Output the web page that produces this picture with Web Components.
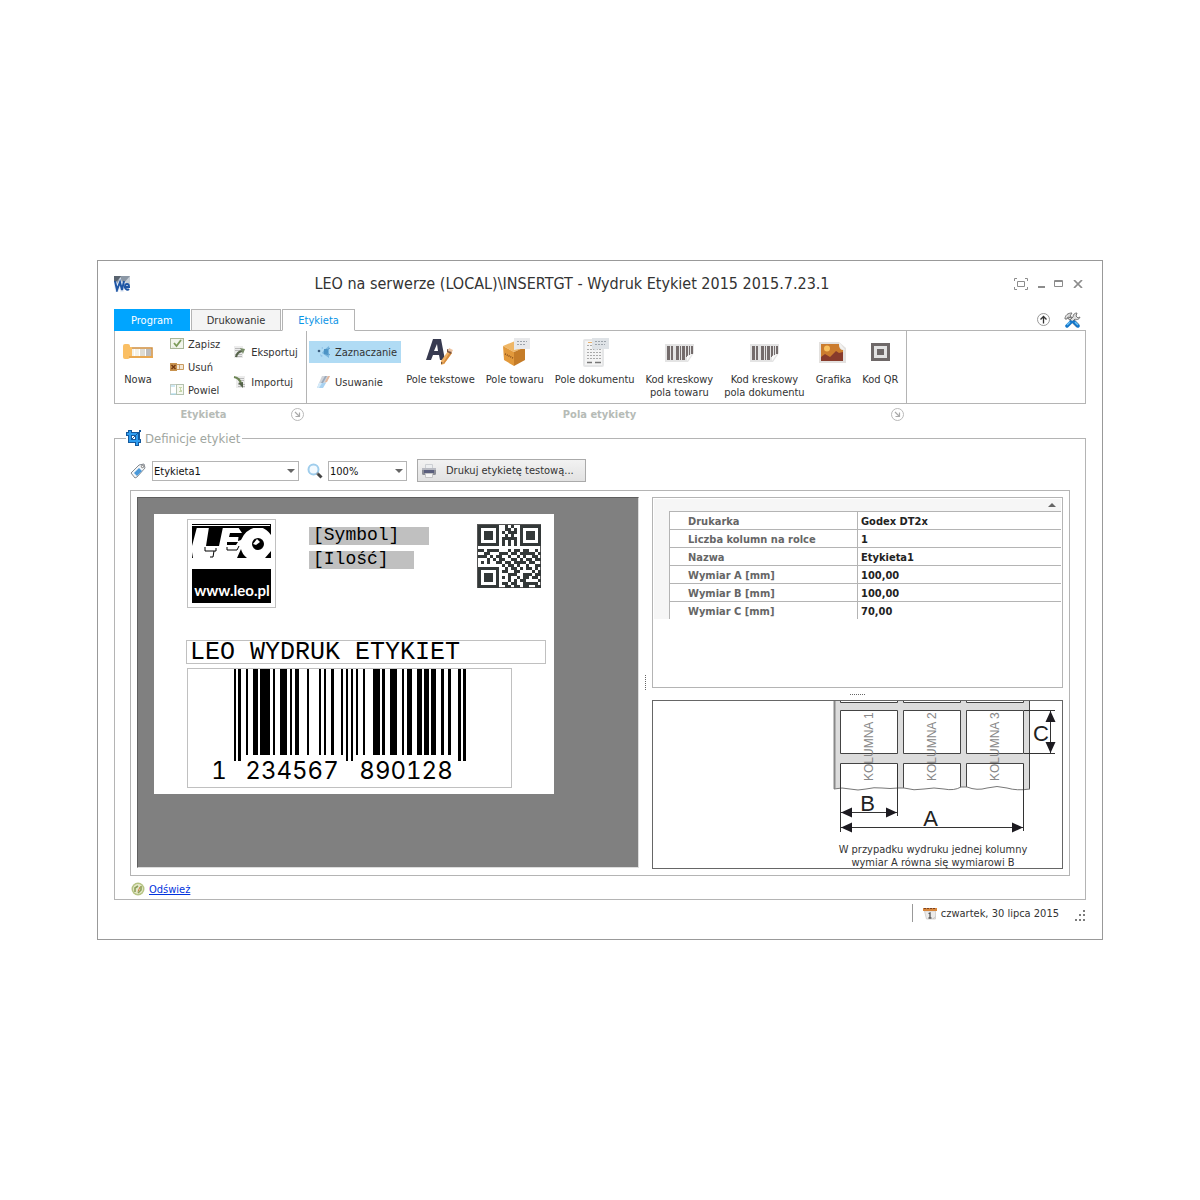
<!DOCTYPE html>
<html lang="pl">
<head>
<meta charset="utf-8">
<title>Wydruk Etykiet 2015</title>
<style>
  html, body { margin: 0; background: #fff; }
  body {
    min-height: 100vh; box-sizing: border-box; padding: 0 97px;
    display: grid; align-items: center; grid-template-columns: minmax(0, 1fr);
    font: 11px/13px "DejaVu Sans Condensed", "DejaVu Sans", sans-serif; color: #333;
    --line: #b4b4b4; --accent: #00a5ff;
  }
</style>
</head>
<body>
<label-app></label-app>
<script>
const ICONS = {
  app: [16, 16, `<path fill="#8b97a5" d="M0 0h16v9H0z"/><path fill="#59636f" d="M0 0h7L0 9z"/><path fill="#c9d0d8" d="M16 0v9l-7-1z"/><path fill="none" stroke="#e8eef7" stroke-width="4" d="M1 6l2 8 3-7 2 7 2-8"/><path fill="none" stroke="#1f56a5" stroke-width="2" d="M1 5l2 9 3-8 2 8 2-9M10 11h5c0-4-4-4-4 0 0 3 3 3 4 2"/>`],
  fullscreen: [14, 12, `<path fill="none" stroke="#8c8c8c" d="M.5 3V.5H3M11 .5h2.500V3M13.500 9v2.500H11M3 11.500H.5V9M3.500 3.500h7v5h-7z"/>`],
  minimize: [8, 8, `<path fill="#8c8c8c" d="M1 6h7v2H1z"/>`],
  maximize: [10, 8, `<path fill="none" stroke="#8c8c8c" d="M.5.5h8v6h-8zM0 1.500h9"/>`],
  close: [10, 8, `<path fill="none" stroke="#8c8c8c" stroke-width="1.700" d="M1 0l8 8M9 0L1 8"/>`],
  up: [13, 13, `<circle cx="6.500" cy="6.500" r="6" fill="#fff" stroke="#999"/><path fill="none" stroke="#333" stroke-width="1.300" d="M6.500 10.500V3.500M3.500 6.500l3-3 3 3"/>`],
  tools: [17, 16, `<path d="M4 4l10 10" stroke="#777" stroke-width="4"/><path d="M4 4l9 9" stroke="#eee" stroke-width="2"/><path d="M1 7c0-4 3-6 7-6L6 4l1 2-3-1-1 2z" fill="#ddd" stroke="#777"/><path d="M16 5c-1 3-4 3-5 2l-3 3-2-2 3-3c0-3 2-4 4-4l-1 3 2 2z" fill="#ddd" stroke="#777"/><path d="M7 10l-4 4M10 10l4 4" stroke="#1476c9" stroke-width="3.500" stroke-linecap="round"/><path d="M6 10l-3 3M11 10l3 3" stroke="#65bdf4" stroke-width="1.500"/>`],
  launcher: [13, 13, `<circle cx="6.500" cy="6.500" r="6" fill="#fff" stroke="#b9b9b9"/><path fill="none" stroke="#aaa" stroke-width="1.200" d="M4 4l4.500 4.500M8.500 4.500v4h-4"/>`],
  nowa: [32, 32, `<path fill="#f5f2e8" stroke="#cf8e3f" stroke-width="1.500" d="M8 11h22v9H8z"/><path fill="#bdbdbd" d="M24 12h5v7h-5z"/><path fill="#dedcd4" d="M18 12h5v7h-5z"/><path stroke="#fff" d="M12.500 12v7M17.500 12v7M23.500 12v7"/><path fill="#fabf64" d="M1 9q0-2 2-2h3q2 0 2 2v1h2v10H8v1l-2 1H3q-2 0-2-2z"/><path fill="#e9a850" d="M7 19h24v2H7z"/>`],
  zapisz: [14, 12, `<rect x=".5" y=".5" width="13" height="10" fill="#f3f6ec" stroke="#a9b798"/><path fill="#e2e7db" d="M2 8l4 2H2zM13 1v3l-3-3z"/><path fill="none" stroke="#7d9c5b" stroke-width="1.800" d="M4 5l2.500 3L11 2"/>`],
  usun: [14, 12, `<path fill="#f3e7d5" stroke="#c99a5e" d="M6 3.500h7.500v5H6z"/><path fill="#c8924e" d="M0 2h7v8H0z"/><path stroke="#733912" stroke-width="1.400" d="M1.500 4l4 4M5.500 4l-4 4"/><path stroke="#cba479" d="M9.500 4v4"/>`],
  powiel: [14, 12, `<rect x=".5" y=".5" width="7" height="10" fill="#fff" stroke="#c3ccc3"/><rect x="6.500" y=".5" width="7" height="10" fill="#f6f8f0" stroke="#b4c2b0"/><path stroke="#9cd3e8" d="M1 2h4M1 10h5"/><path fill="#c6d7a8" d="M9 3h3v1h-1v2h1v2H9V7h1V4H9z"/>`],
  eksportuj: [14, 14, `<path fill="#ececec" d="M1 1h9v12H1z"/><path stroke="#b9b9b9" d="M2 3.500h6M2 5.500h6M2 9.500h7M2 11.500h7"/><path fill="none" stroke="#55634a" stroke-width="2.200" d="M3 12q1-5 6-6"/><path fill="#788c68" d="M7 3l5 1-2 5z"/>`],
  importuj: [14, 14, `<path fill="#ececec" d="M3 1h9v12H3z"/><path stroke="#b9b9b9" d="M5 3.500h6M5 5.500h6M5 9.500h7M5 11.500h7"/><path fill="none" stroke="#6d8554" stroke-width="2.200" d="M1 2q6 1 7 7"/><path fill="#55634a" d="M5 8l5-1v6z"/>`],
  zaznacz: [16, 14, `<path fill="#79b5dd" d="M13 1v12L6 8l2-3z"/><path fill="#4c93c5" d="M8 4h4v6l-4-1z"/><circle cx="3" cy="6" r="1.300" fill="#3d5f80"/><path fill="#8fc0e6" d="M4 9l3 2-2 1zM5 3l2-1v2z"/><path stroke="#5a9ccc" d="M14 3l-3 2M14 10l-3-2"/>`],
  usuwanie: [16, 14, `<path fill="#d0d4da" d="M6 1h8l-4 7H3z"/><path fill="#9aa9bb" d="M9 1h2L7 8H5z"/><path fill="#e5b79a" d="M12 1h2l-3 6H9z"/><path fill="#a9d2f1" d="M3 8h7l-3 5H1z"/><path fill="#d7ebf8" d="M3 8h3l-3 5H1z"/>`],
  tekst: [32, 32, `<path fill="#373a50" d="M9 2h8l4 21h-5l-1-5H9l-2 5H2zm4 5l-3 7h4z"/><path fill="#f0b266" d="M24 14l4 2-8 11-3 1v-4z"/><path fill="#d58b3c" d="M26 15l2 1-8 11-1-1z"/><path fill="#77523f" d="M23 12l5 2-1 3-4-2z"/><path fill="#edc3a0" d="M25 11l4 2-1 2-4-1z"/><path fill="#553b2b" d="M17 27v-2l2 1z"/>`],
  towar: [32, 32, `<path fill="#efb767" d="M4 9l12-5 10 6-11 5z"/><path fill="#e2993b" d="M4 9l11 6v14L5 23z"/><path fill="#c57c28" d="M15 15l11-5v13l-11 6z"/><path stroke="#884d1c" stroke-width="1.500" stroke-dasharray="1 1" d="M6 17l8 4"/><path fill="#e8e9eb" d="M15 1h16v11H20l-5 1z"/><path stroke="#9da4ab" stroke-dasharray="2 1" d="M18 4.500h10M18 7.500h9"/>`],
  dokument: [32, 32, `<rect x="4" y="2" width="21" height="28" rx="2" fill="#e5e6e7"/><path fill="#f4f4f4" d="M6 4h17v24H6z"/><path stroke="#e8b06e" d="M9 5.500h4"/><path stroke="#aaa" stroke-dasharray="2 1" d="M8 8.500h13M8 12.500h14M8 15.500h14M8 18.500h14M8 21.500h14"/><path stroke="#777" stroke-width="1.500" d="M8 25.500h5M16 25.500h6"/><path fill="#dfe3e7" d="M13 1h17v11H19l-3 2-1-2h-2z"/><path stroke="#9da4ab" stroke-dasharray="2 1" d="M16 4.500h11M16 7.500h10"/>`],
  kreskowy: [32, 32, `<path fill="#e4e4e4" d="M2 7h29v9l-6 9H2z"/><path fill="#746c6c" d="M4 9h3v14H4zM8 9h2v14H8zM13 9h3v14h-3zM17 9h1v14h-1zM19 9h3v14h-3zM23 9h2v11h-2zM26 9h1v10h-1zM28 9h2v8h-2z"/><path fill="#fafafa" d="M24 24v-5l5-2z"/>`],
  grafika: [32, 32, `<path fill="#e3e1df" d="M2 5h20l7 6v15H2z"/><path fill="#cb7c2e" d="M4 7h18q0 6 4 6v11H4z"/><circle cx="10" cy="11.500" r="3" fill="#f9c15f"/><path fill="#883b2c" d="M4 20l4-3 5 3 6-6 3 2 4-1v9H4z"/><path fill="#f3f2f0" d="M22 5l6 8q-6 0-6-8z"/>`],
  qr: [32, 32, `<path fill="#6e6868" d="M7 6h19v18H7z"/><path fill="#e2e2e2" d="M10 9h13v12H10z"/><path fill="#6e6868" d="M13 12h7v6h-7z"/>`],
  crop: [16, 16, `<path fill="#15599c" d="M2 0h4v2h7V0h2v2h-1v7h1v4h-2v3h-4v-3H2V6H0V2h2z"/><path fill="#2d9cf0" d="M3 1h2v2h7v7h2v2h-2v3h-2v-3H3V5H1V3h2z"/><path fill="#15599c" d="M5 5h5v5H5z"/><path fill="#fff" d="M6 6h3v3H6z"/><path stroke="#15599c" d="M5 10l8-8"/>`],
  tag: [16, 16, `<path fill="#f4f6f8" stroke="#858b92" d="M1 10L9 2l5-1 1 4-8 9-2 1z"/><path fill="#4a98d8" d="M4 10l5-5 3 3-5 5z"/><circle cx="12.500" cy="3.500" r="1.200" fill="#fff" stroke="#777"/>`],
  lupa: [16, 16, `<circle cx="6.500" cy="6.500" r="5" fill="#f3faff" stroke="#9fcdec" stroke-width="2"/><path stroke="#444" stroke-width="3" d="M10.500 10.500l4 4"/><path stroke="#888" stroke-width="2" d="M10 10l1 1"/>`],
  drukarka: [16, 16, `<path fill="#eceef0" stroke="#cdd0d4" d="M4.500 1.500h7v4h-7z"/><rect x="1" y="5" width="14" height="7" rx="1.500" fill="#8b8d96"/><path fill="#5b5f7d" d="M3 7h10v3H3z"/><path fill="#b8bac2" d="M1 5h14v2H1z"/><path fill="#f5f5f5" stroke="#c5c5c5" d="M4.500 10.500h7v4h-7z"/>`],
  odswiez: [14, 14, `<circle cx="7" cy="7" r="6.500" fill="#b5c383"/><circle cx="7" cy="7" r="5" fill="#e4e8c8"/><path fill="none" stroke="#8ba05a" stroke-width="1.600" d="M4 10V6l3-2M10 4v4l-3 3"/><path stroke="#c98040" d="M7 9.500L9 5"/>`],
  kalendarz: [16, 14, `<path fill="#ecebea" stroke="#d5d3d1" d="M2.500 5h11v8h-9z"/><path fill="#d8873c" d="M1 2h14v3H1z"/><path stroke="#7c4221" stroke-dasharray="2 1" d="M2 2.500h12"/><path fill="none" stroke="#555" stroke-width="1.300" d="M6.500 7.500L8 7v5M6.500 12h3"/><path fill="#c7c3c0" d="M10 13l4-3-2 3z"/>`],
  uchwyt: [12, 12, `<path fill="#7c7c7c" d="M9 0h2v2H9zM5 4h2v2H5zM9 4h2v2H9zM1 9h2v2H1zM5 9h2v2H5zM9 9h2v2H9z"/>`],
};

function define(name, css, html, setup) {
  const template = document.createElement('template');
  template.innerHTML = `<style>:host{display:block;box-sizing:border-box}*{box-sizing:border-box}button{font:inherit;color:inherit;background:none;border:0;padding:0;margin:0}${css}</style>${html}`;
  customElements.define(name, class extends HTMLElement {
    constructor() {
      super();
      this.attachShadow({ mode: 'open' }).append(template.content.cloneNode(true));
    }
    connectedCallback() { if (setup) setup(this, this.shadowRoot); }
  });
}

define('ui-icon', `:host{display:block;flex:none}svg{display:block}`, ``, (el, root) => {
  const [w, h, body] = ICONS[el.getAttribute('name')];
  if (!root.querySelector('svg'))
    root.innerHTML += `<svg width="${w}" height="${h}" viewBox="0 0 ${w} ${h}" aria-hidden="true">${body}</svg>`;
});

define('title-bar', `
  :host{display:flex;align-items:center;height:46px;margin-bottom:2px;padding-right:3px}
  h1{flex:1;margin:0;text-align:center;font:16px/20px "DejaVu Sans Condensed","DejaVu Sans",sans-serif;color:#333}
  nav{display:flex;align-items:center;gap:9px}
  button{display:block}`,
  `<ui-icon name="app"></ui-icon><h1><slot></slot></h1>
   <nav><button aria-label="Pełny ekran"><ui-icon name="fullscreen"></ui-icon></button>
   <button aria-label="Minimalizuj"><ui-icon name="minimize"></ui-icon></button>
   <button aria-label="Maksymalizuj"><ui-icon name="maximize"></ui-icon></button>
   <button aria-label="Zamknij"><ui-icon name="close"></ui-icon></button></nav>`);

define('tab-strip', `
  :host{display:flex;height:21px;gap:1px;padding-right:5px}
  .tools{display:flex;gap:14px;align-items:center;margin-left:auto}`,
  `<slot></slot><div class="tools"><button aria-label="Zwiń wstążkę"><ui-icon name="up"></ui-icon></button><button aria-label="Opcje"><ui-icon name="tools"></ui-icon></button></div>`);

define('tab-item', `
  button{display:block;height:22px;padding:0 15px;border:1px solid var(--line);background:#f4f4f4;position:relative}
  :host([kind=program]) button{background:var(--accent);border-color:var(--accent);color:#fff;padding:0 16px}
  :host([kind=selected]) button{background:#fff;color:#0a94e6;border-bottom-color:#fff}`,
  `<button role="tab"><slot></slot></button>`);

define('ribbon-group', `
  :host{display:flex;flex-direction:column}
  .body{display:flex;height:74px;border:1px solid var(--line);border-right:0}
  :host(:last-of-type) .body{border-right:1px solid var(--line)}
  footer{display:grid;grid-template-columns:1fr 13px;align-items:center;height:20px;padding:0 2px;text-align:center;font-weight:bold;color:#b6bbb6}`,
  `<div class="body"><slot></slot></div>`, (el, root) => {
    const caption = el.getAttribute('caption');
    if (caption && !root.querySelector('footer'))
      root.innerHTML += `<footer><span>${caption}</span><button aria-label="${caption}: więcej"><ui-icon name="launcher"></ui-icon></button></footer>`;
  });

define('ribbon-column', `
  :host{display:flex;flex-direction:column;justify-content:space-between}`, `<slot></slot>`);

define('ribbon-small', `
  button{display:flex;align-items:center;gap:4px;height:22px;white-space:nowrap}
  :host([wide]) button{padding:0 4px 0 7px;gap:3px;width:100%}
  :host([pressed]) button{background:#b0dbf4}`,
  `<button><span class="i"></span><slot></slot></button>`, (el, root) => {
    root.querySelector('.i').innerHTML = `<ui-icon name="${el.getAttribute('icon')}"></ui-icon>`;
  });

define('ribbon-large', `
  button{display:flex;flex-direction:column;align-items:center;gap:4px;padding-top:6px;white-space:nowrap;text-align:center}`,
  `<button><span class="i"></span><span><slot></slot></span></button>`, (el, root) => {
    root.querySelector('.i').innerHTML = `<ui-icon name="${el.getAttribute('icon')}"></ui-icon>`;
  });

define('group-box', `
  fieldset{margin:5px 0 0;padding:12px 15px 0;border:1px solid var(--line);min-width:0}
  legend{display:flex;align-items:center;gap:3px;height:18px;margin-left:-4px;padding:0 2px 0 0;font-size:13px;color:#a0a6a0}`,
  `<fieldset><legend><ui-icon name="crop"></ui-icon><slot name="legend"></slot></legend><slot></slot></fieldset>`);

define('combo-box', `
  :host{display:block;position:relative;height:20px}
  select{appearance:none;display:block;width:100%;height:20px;margin:0;padding:2px 1px 0;border:1px solid var(--line);border-radius:0;background:#fff;color:#111;font:inherit}
  i{position:absolute;right:4px;top:8px;border:4px solid transparent;border-top-color:#666;border-bottom:0;pointer-events:none}`,
  `<select></select><i></i>`, (el, root) => {
    const s = root.querySelector('select');
    s.setAttribute('aria-label', el.getAttribute('label'));
    s.innerHTML = `<option>${el.getAttribute('value')}</option>`;
  });

define('tool-row', `
  :host{display:flex;align-items:center;height:23px}
  .name{width:147px;margin:0 8px 0 6px}
  .zoom{width:79px;margin:0 10px 0 5px}
  .print{display:flex;align-items:center;gap:9px;height:23px;padding:0 11px 0 3px;border:1px solid #aaa;background:linear-gradient(#f2f2f2,#e2e2e2)}`,
  `<ui-icon name="tag"></ui-icon><combo-box class="name" label="Etykieta" value="Etykieta1"></combo-box>
   <ui-icon name="lupa"></ui-icon><combo-box class="zoom" label="Powiększenie" value="100%"></combo-box>
   <button class="print"><ui-icon name="drukarka"></ui-icon>Drukuj etykietę testową...</button>`);

define('ean-code', `
  :host{border:1px solid #c0c0c0}
  svg{display:block}`, ``, (el, root) => {
  const L = ['0001101','0011001','0010011','0111101','0100011','0110001','0101111','0111011','0110111','0001011'];
  const inv = s => s.replace(/./g, c => 1 - c);
  const rev = s => [...s].reverse().join('');
  const parity = ['LLLLLL','LLGLGG','LLGGLG','LLGGGL','LGLLGG','LGGLLG','LGGGLL','LGLGLG','LGLGGL','LGGLGL'];
  const code = el.getAttribute('value');
  let bits = '101';
  for (let i = 1; i < 7; i++) bits += parity[code[0]][i - 1] === 'L' ? L[code[i]] : rev(inv(L[code[i]]));
  bits += '01010';
  for (let i = 7; i < 13; i++) bits += inv(L[code[i]]);
  bits += '101';
  const m = 232 / 95;
  let bars = '';
  for (let i = 0; i < bits.length; i++) {
    if (bits[i] !== '1') continue;
    let j = i;
    while (bits[j] === '1') j++;
    const guard = i < 3 || (i > 44 && i < 50) || i > 91;
    const x1 = Math.round(45.5 + i * m), x2 = Math.round(45.5 + j * m);
    bars += `<path d="M${x1} 0h${x2 - x1}v${guard ? 92 : 86}h${x1 - x2}z"/>`;
    i = j;
  }
  root.innerHTML += `<svg width="323" height="118" viewBox="0 0 323 118">${bars}
    <g font-family="Inter, 'Liberation Sans', sans-serif" font-size="24" text-anchor="middle" style="font-variant-numeric:tabular-nums">
    <text x="31" y="110">${code[0]}</text><text x="104" y="110">${code.slice(1, 7)}</text><text x="218" y="110">${code.slice(7)}</text></g></svg>`;
});

define('qr-code', `svg{display:block}`, ``, (el, root) => {
  const rows = [
    '111111100101001111111','100000100110101000001','101110101011101011101','101110100101001011101',
    '101110101111101011101','100000101010101000001','111111101010101111111','000000000000000000000',
    '110111100010110110010','001100011101101111101','111010110010010100110','000101011001101011011',
    '010100110110111101100','000000001011010010011','111111100101101011010','100000101100110000101',
    '101110100011100111011','101110101010010110110','101110100010101100001','100000101101100111110','111111100110110110011'];
  let d = '';
  rows.forEach((r, y) => [...r].forEach((c, x) => { if (c === '1') d += `M${x * 3 + 1} ${y * 3 + 1}h3v3h-3z`; }));
  root.innerHTML += `<svg width="64" height="64" viewBox="0 0 64 64" shape-rendering="crispEdges"><path fill="none" stroke="#555" d="M.5.5h63v63H.5z"/><path fill="#333838" d="${d}"/></svg>`;
});

define('leo-logo', `
  :host{border:1px solid #c0c0c0;padding:4px}
  svg{display:block}
  `, `<svg width="79" height="79" viewBox="0 0 79 79">
    <path fill="#000" d="M0 0h79v1H0zM0 2h79v2H0zM78 0h1v9h-1z"/>
    <path fill="#000" d="M0 3h5L0 22zM17 3h14l-4 19H14z"/>
    <path fill="#000" d="M38 9h11l-1 4H37zM35 18h11l-2 3h-9z"/>
    <path fill="#000" d="M46 3h18q-11 3-15 13l-3 1 1-8h3z"/>
    <path fill="#000" d="M68 3h11v8q-4-6-11-8z"/>
    <path fill="#000" d="M45 34l4-9q1 5 6 9zM73 34l6-7v7zM0 28v6h1z"/>
    <path fill="none" stroke="#000" d="M13 23v4h11v-3M22 27l-1 6h-3M35 23v3h10l2-4"/>
    <circle cx="66" cy="20" r="6" fill="#000"/><path fill="#fff" d="M61 20l4-5 3 3-4 3z"/>
    <path fill="#000" d="M0 45h79v34H0z"/>
    <text x="40" y="72" text-anchor="middle" font-family="Lato, sans-serif" font-weight="bold" font-size="15" fill="#fff">www.leo.pl</text>
  </svg>`);

define('label-canvas', `
  :host{align-self:start;padding:16px;background:#808080;border:1px solid;border-color:#5f5f5f #ddd #ddd #5f5f5f;min-height:371px}
  .label{position:relative;width:400px;height:280px;background:#fff;color:#000;font-family:"Liberation Mono",monospace;white-space:nowrap}
  .label>*{position:absolute}
  .field{height:18px;padding-left:4px;background:#c0c0c0;font-size:18px;line-height:17px}
  .title{left:32px;top:126px;width:360px;height:24px;padding-left:3px;border:1px solid #c0c0c0;font-size:25px;line-height:24px}`,
  `<div class="label">
    <leo-logo style="left:33px;top:5px;width:89px;height:89px"></leo-logo>
    <div class="field" style="left:155px;top:13px;width:120px">[Symbol]</div>
    <div class="field" style="left:155px;top:37px;width:105px">[Ilość]</div>
    <qr-code style="left:323px;top:10px"></qr-code>
    <div class="title">LEO WYDRUK ETYKIET</div>
    <ean-code value="1234567890128" style="left:33px;top:154px;width:325px;height:120px"></ean-code>
  </div>`);

define('property-grid', `
  :host{height:191px;border:1px solid var(--line);background:#fff;padding:1px}
  .head{display:flex;justify-content:flex-end;align-items:center;height:12px;padding-right:5px;background:#f6f6f6}
  .head i{border:4px solid transparent;border-bottom-color:#666;border-top:0}
  .rows{padding-left:15px;background:#f6f6f6}
  table{width:100%;border-collapse:separate;border-spacing:0;background:#fff;font-weight:bold;table-layout:fixed}
  th,td{height:18px;padding:2px 0 0;border:0 solid var(--line);border-width:1px 0 0 1px;text-align:left;line-height:15px}
  th{width:188px;padding-left:18px;color:#666}
  td{padding-left:3px;color:#222}`,
  `<div class="head"><i></i></div><div class="rows"><table><tbody></tbody></table></div>`, (el, root) => {
    root.querySelector('tbody').innerHTML = [['Drukarka','Godex DT2x'],['Liczba kolumn na rolce','1'],['Nazwa','Etykieta1'],
      ['Wymiar A [mm]','100,00'],['Wymiar B [mm]','100,00'],['Wymiar C [mm]','70,00']]
      .map(([k, v]) => `<tr><th scope="row">${k}</th><td>${v}</td></tr>`).join('');
  });

define('dimension-preview', `
  :host{display:flex;justify-content:flex-end;height:169px;border:1px solid #666;background:#fff;overflow:hidden}
  figure{margin:0;width:229px}
  svg{display:block}
  figcaption{padding:0 29px 0 0;margin-top:5px;text-align:center;white-space:nowrap}`,
  `<figure><svg width="229" height="137" viewBox="833 701 229 137">
    <path fill="#dcdcdc" d="M834 701h195v91H834z"/>
    <path fill="#fff" stroke="#444" d="M840.500 698h57v4.500h-57zM903.500 698h57v4.500h-57zM966.500 698h57v4.500h-57zM840.500 710.500h57v43h-57zM903.500 710.500h57v43h-57zM966.500 710.500h57v43h-57z"/>
    <path fill="#fff" stroke="#444" d="M840.500 793v-29.500h57V793M903.500 793v-29.500h57V793M966.500 793v-29.500h57V793"/>
    <path stroke="#888" stroke-width="2" d="M834.500 701v88"/><path stroke="#444" d="M1029.500 701v88"/>
    <path fill="#fff" d="M834 789q8-2 16 0t16 0 16-1 16 0h6q10 3 20 1t20 0 17-2h6q10 4 20 1t20 0 23 1v7H833z"/>
    <path fill="none" stroke="#777" d="M834 789q8-2 16 0t16 0 16-1 16 0h6q10 3 20 1t20 0 17-2h6q10 4 20 1t20 0 23 1"/>
    <path fill="none" stroke="#333" d="M840.500 764v68M897.500 764v52M1023.500 764v67M1024 710.500h31M1024 753.500h31M841 812.500h56M841 827.500h182M1050.500 711v42"/>
    <path fill="#1c1a20" d="M841 812.500l11-5v10zM897 812.500l-11-5v10zM841 827.500l11-5v10zM1023 827.500l-11-5v10zM1050.500 711l-5 11h10zM1050.500 753l-5-11h10z"/>
    <g font-family="'Liberation Sans', sans-serif" font-size="12" fill="#888">
      <text transform="translate(873 781) rotate(-90)">KOLUMNA 1</text>
      <text transform="translate(936 781) rotate(-90)">KOLUMNA 2</text>
      <text transform="translate(999 781) rotate(-90)">KOLUMNA 3</text></g>
    <g font-family="'Liberation Sans', sans-serif" font-size="22" fill="#222" text-anchor="middle">
      <text x="867.500" y="811">B</text><text x="930.500" y="826">A</text><text x="1041" y="741">C</text></g>
  </svg><figcaption>W przypadku wydruku jednej kolumny<br>wymiar A równa się wymiarowi B</figcaption></figure>`);

define('split-grip', `
  :host{display:grid;place-items:center}
  i{width:16px;height:1px;background:repeating-linear-gradient(90deg,#666 0 1px,transparent 1px 2px)}
  :host([vertical]) i{width:1px;height:16px;background:repeating-linear-gradient(#666 0 1px,transparent 1px 2px)}`,
  `<i></i>`);

define('work-area', `
  :host{display:grid;grid-template-columns:minmax(0,502fr) 13px minmax(0,411fr);margin-top:8px;padding:6px;border:1px solid var(--line)}
  .side{display:grid;grid-template-rows:auto 12px auto}`,
  `<label-canvas></label-canvas><split-grip vertical></split-grip>
   <div class="side"><property-grid></property-grid><split-grip></split-grip><dimension-preview></dimension-preview></div>`);

define('refresh-link', `
  :host{display:flex;align-items:center;gap:4px;height:23px;padding:3px 0 0 1px}
  a{color:#0033dd}`,
  `<ui-icon name="odswiez"></ui-icon><a href="#odswiez">Odśwież</a>`);

define('status-bar', `
  :host{display:flex;justify-content:flex-end;align-items:center;height:39px;padding-bottom:13px}
  .date{display:flex;align-items:center;gap:3px;height:18px;padding-left:9px;border-left:1px solid #999}
  .grip{margin:6px 0 0 15px}`,
  `<div class="date"><ui-icon name="kalendarz"></ui-icon><slot></slot></div><ui-icon class="grip" name="uchwyt"></ui-icon>`);

define('label-app', `
  :host{border:1px solid #999;padding:0 16px;background:#fff}
  .ribbon{display:grid;grid-template-columns:192px 600px minmax(0,1fr)}
  .large{display:flex;gap:11px;padding-left:5px}
  .c0{margin-left:7px}.c1{margin:2px 0 2px 16px}.c2{margin:10px 0 10px 13px}.c3{margin:10px 0 10px 2px}`,
  `<title-bar>LEO na serwerze (LOCAL)\\INSERTGT - Wydruk Etykiet 2015 2015.7.23.1</title-bar>
   <tab-strip><tab-item kind="program">Program</tab-item><tab-item>Drukowanie</tab-item><tab-item kind="selected">Etykieta</tab-item></tab-strip>
   <div class="ribbon">
     <ribbon-group caption="Etykieta">
       <ribbon-large class="c0" icon="nowa">Nowa</ribbon-large>
       <ribbon-column class="c1"><ribbon-small icon="zapisz">Zapisz</ribbon-small><ribbon-small icon="usun">Usuń</ribbon-small><ribbon-small icon="powiel">Powiel</ribbon-small></ribbon-column>
       <ribbon-column class="c2"><ribbon-small icon="eksportuj">Eksportuj</ribbon-small><ribbon-small icon="importuj">Importuj</ribbon-small></ribbon-column>
     </ribbon-group>
     <ribbon-group caption="Pola etykiety">
       <ribbon-column class="c3"><ribbon-small wide pressed icon="zaznacz">Zaznaczanie</ribbon-small><ribbon-small wide icon="usuwanie">Usuwanie</ribbon-small></ribbon-column>
       <div class="large">
         <ribbon-large icon="tekst">Pole tekstowe</ribbon-large><ribbon-large icon="towar">Pole towaru</ribbon-large><ribbon-large icon="dokument">Pole dokumentu</ribbon-large>
         <ribbon-large icon="kreskowy">Kod kreskowy<br>pola towaru</ribbon-large><ribbon-large icon="kreskowy">Kod kreskowy<br>pola dokumentu</ribbon-large>
         <ribbon-large icon="grafika">Grafika</ribbon-large><ribbon-large icon="qr">Kod QR</ribbon-large>
       </div>
     </ribbon-group>
     <ribbon-group></ribbon-group>
   </div>
   <group-box><span slot="legend">Definicje etykiet</span>
     <tool-row></tool-row><work-area></work-area><refresh-link></refresh-link>
   </group-box>
   <status-bar>czwartek, 30 lipca 2015</status-bar>`);
</script>
</body>
</html>
